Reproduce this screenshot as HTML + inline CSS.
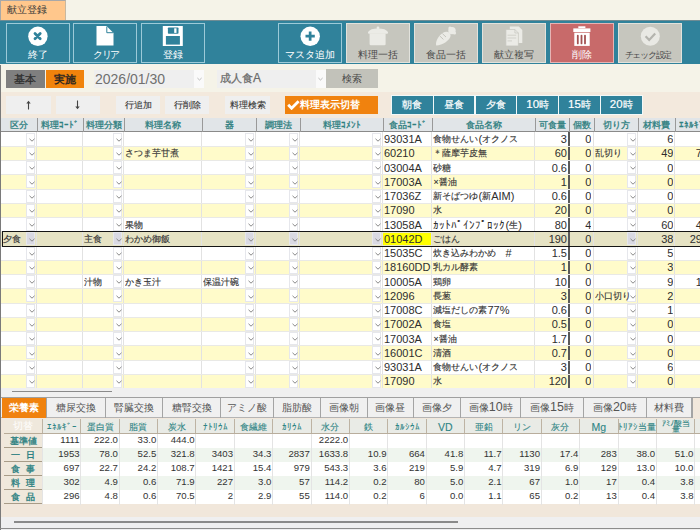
<!DOCTYPE html><html><head><meta charset="utf-8"><style>
*{box-sizing:border-box;margin:0;padding:0}
html,body{width:700px;height:530px;overflow:hidden;background:#F5F3E8;font-family:"Liberation Sans",sans-serif;color:#333}
.ab{position:absolute}
.tb{position:absolute;top:23px;width:64px;height:40px;border:1px solid #9ccad8;background:#30829B;color:#fff;font-size:10px;text-align:center}
.tb .lbl{position:absolute;left:0;right:0;top:25px;line-height:11px;white-space:nowrap}
.tb svg{position:absolute;left:-1px;top:-1px}
.gb{background:#c6c6be;border-color:#e2e2dc;color:#4a4a4a}
.rb{background:#c86a6a;border-color:#e6b4b4;color:#fff}
.cell{position:absolute;white-space:nowrap;overflow:hidden;font-size:11px;line-height:14px}

.sb{position:absolute;background:#efefef;color:#333;font-size:9.4px;text-align:center;line-height:18.5px;-webkit-text-stroke:0.1px #333}
.mb{position:absolute;top:95.2px;height:19.5px;width:42.5px;background:#30829B;border:1px solid #f2f8f8;color:#fff;font-size:9.8px;text-align:center;line-height:17px;-webkit-text-stroke:0.2px #fff}
.hd{position:absolute;top:118px;height:14px;font-size:9.2px;line-height:15.5px;color:#2e7f80;-webkit-text-stroke:0.3px #2e7f80;text-align:center;white-space:nowrap;overflow:hidden}
.bt{position:absolute;top:398.3px;height:19.7px;background:#f0f0f0;border:1px solid #c4c4c4;color:#555;font-size:10.2px;text-align:center;line-height:18px;white-space:nowrap}
.nh{position:absolute;top:419.5px;height:13.5px;font-size:9px;line-height:15px;color:#2f8585;-webkit-text-stroke:0.1px #2f8585;text-align:center;white-space:nowrap;overflow:hidden}
.nc{position:absolute;font-size:9.6px;line-height:12.6px;text-align:right;white-space:nowrap;color:#333}
</style></head><body>
<div class="ab" style="left:0;top:0;width:66px;height:20.5px;background:#ffc78c;border-top:1px solid #a8a8a8;border-left:1px solid #a8a8a8;border-right:1px solid #c8b8a0;font-size:10.3px;line-height:17.5px;padding-left:6px;color:#3a3a3a">献立登録</div><div class="ab" style="left:0;top:20px;width:700px;height:44.2px;background:#30829B;border-top:1px solid #6f8c94"></div><div class="tb " style="left:5.5px"><svg width="64" height="40" viewBox="0 0 64 40"><circle cx="31.9" cy="13.3" r="9.7" fill="#fff"/><path d="M29 10.6L34.2 15.8M34.2 10.6L29 15.8" stroke="#30829B" stroke-width="2.8" stroke-linecap="round"/></svg><div class="lbl">終了</div></div><div class="tb " style="left:73.2px"><svg width="64" height="40" viewBox="0 0 64 40"><path d="M23.5 3H33.5L40.5 10V22.5H23.5Z" fill="#fff"/><path d="M33.8 3.5V9.7H40" fill="none" stroke="#30829B" stroke-width="1"/></svg><div class="lbl"><span style="letter-spacing:-1.6px;margin-left:1.6px">クリア</span></div></div><div class="tb " style="left:141.2px"><svg width="64" height="40" viewBox="0 0 64 40"><rect x="21.8" y="3" width="20" height="20" fill="#fff"/><rect x="26.9" y="4.4" width="10.6" height="6.3" rx="0.8" fill="#30829B"/><rect x="33.2" y="5.3" width="2.3" height="4.6" fill="#fff"/><rect x="24.9" y="13" width="14" height="8.6" fill="#30829B"/></svg><div class="lbl">登録</div></div><div class="tb " style="left:277.5px"><svg width="64" height="40" viewBox="0 0 64 40"><circle cx="32.2" cy="13.3" r="9.7" fill="#fff"/><path d="M32.15 8.5V17.8M27.5 13.15H36.8" stroke="#30829B" stroke-width="2.7"/></svg><div class="lbl">マスタ追加</div></div><div class="tb gb" style="left:345.6px"><svg width="64" height="40" viewBox="0 0 64 40"><rect x="30.7" y="3.6" width="2.6" height="2.8" rx="1" fill="#ebebe6"/><path d="M22.3 9Q24 5.6 32 5.6Q40 5.6 41.7 9Z" fill="#ebebe6"/><rect x="22" y="8.6" width="20" height="2.2" rx="1" fill="#ebebe6"/><path d="M23.6 10.6H39.6V21Q39.6 22.2 38.4 22.2H24.8Q23.6 22.2 23.6 21Z" fill="#ebebe6"/></svg><div class="lbl">料理一括</div></div><div class="tb gb" style="left:413.7px"><svg width="64" height="40" viewBox="0 0 64 40"><path d="M22.2 22.6C21.2 18.5 24.5 12.5 29 9.8C32.5 7.6 36.8 9.2 36.6 12.8C36.4 16.8 28.5 22.6 22.2 22.6Z" fill="#ebebe6"/><circle cx="38" cy="7.6" r="3.7" fill="#ebebe6"/><circle cx="36" cy="5" r="1.6" fill="#ebebe6"/><circle cx="40.5" cy="10" r="1.6" fill="#ebebe6"/><path d="M25.6 12.8L29.4 16.4M28.4 10.6L32 14" stroke="#c6c6be" stroke-width="1"/></svg><div class="lbl">食品一括</div></div><div class="tb gb" style="left:481.5px"><svg width="64" height="40" viewBox="0 0 64 40"><path d="M27.8 3.6H36.8L40.3 7.1V20H27.8Z" fill="#ebebe6"/><path d="M23.9 6.5H32.9L36.4 10V22.9H23.9Z" fill="#ebebe6" stroke="#c6c6be" stroke-width="0.7"/><path d="M32.9 6.5V10H36.4" fill="none" stroke="#c6c6be" stroke-width="0.7"/><path d="M25.5 12.2H34.2M25.5 15H34.2M25.5 17.9H30" stroke="#c6c6be" stroke-width="0.7"/></svg><div class="lbl">献立複写</div></div><div class="tb rb" style="left:549.6px"><svg width="64" height="40" viewBox="0 0 64 40"><rect x="28.3" y="3.3" width="7.1" height="1.9" fill="#fff"/><rect x="23.3" y="5.4" width="17.1" height="3.6" fill="#fff"/><path d="M24.3 9.7H39.7V22.9H24.3Z" fill="#fff"/><path d="M27.8 12.6V20.4M31.5 12.6V20.4M35 12.6V20.4" stroke="#a45252" stroke-width="1.8" stroke-linecap="round"/></svg><div class="lbl">削除</div></div><div class="tb gb" style="left:617.6px"><svg width="64" height="40" viewBox="0 0 64 40"><circle cx="32.3" cy="13.2" r="9.5" fill="#e9e9e4"/><path d="M27.6 13.2L31.2 17L37.2 10.4" fill="none" stroke="#b4b4ae" stroke-width="2.2"/></svg><div class="lbl" style="letter-spacing:-1.3px;font-size:9.4px;padding-right:3.5px">チェック設定</div></div><div class="ab" style="left:6px;top:69.5px;width:38.5px;height:18.5px;background:#7f7f7f;color:#2e2e2e;font-size:11px;line-height:18px;text-align:center;-webkit-text-stroke:0.3px #2e2e2e">基本</div><div class="ab" style="left:46px;top:69.5px;width:38px;height:18.5px;background:#f0830c;color:#222;font-size:11px;line-height:18px;text-align:center;-webkit-text-stroke:0.35px #222">実施</div><div class="ab" style="left:93.5px;top:70px;width:101px;height:17.7px;background:#efefef;color:#707070;font-size:14px;line-height:18px;padding-left:1.5px">2026/01/30</div><div class="ab" style="left:194.3px;top:70px;width:10px;height:17.7px;background:#fafafa"><svg class="ab" style="left:2.5px;top:7px" width="5" height="4" viewBox="0 0 5 4"><path d="M0.4 1L2.5 3L4.6 1" fill="none" stroke="#b4b4b4" stroke-width="0.9"/></svg></div><div class="ab" style="left:217px;top:70px;width:98.6px;height:17.7px;background:#efefef;color:#6a6a6a;font-size:10.5px;line-height:17px;padding-left:3px;-webkit-text-stroke:0.25px #6a6a6a">成人食<span style="font-size:12px">A</span></div><div class="ab" style="left:315.6px;top:70px;width:10px;height:17.7px;background:#fafafa"><svg class="ab" style="left:2.5px;top:7px" width="5" height="4" viewBox="0 0 5 4"><path d="M0.4 1L2.5 3L4.6 1" fill="none" stroke="#b4b4b4" stroke-width="0.9"/></svg></div><div class="ab" style="left:326px;top:69.3px;width:52.3px;height:19px;background:#c2c2ba;color:#454545;font-size:9.6px;line-height:19px;text-align:center">検索</div><div class="ab" style="left:0;top:92.3px;width:700px;height:25.5px;background:#f3e9dd"></div><div class="sb" style="left:6.0px;top:95.7px;width:45.0px;height:18.5px"><svg class="ab" style="left:19px;top:4px" width="7" height="10" viewBox="0 0 7 10"><path d="M3.5 2.5V9.5" stroke="#444" stroke-width="1.1"/><path d="M1.3 3.6L3.5 0.8L5.7 3.6Z" fill="#444"/></svg></div><div class="sb" style="left:56.0px;top:95.7px;width:44.0px;height:18.5px"><svg class="ab" style="left:18px;top:4.5px" width="7" height="10" viewBox="0 0 7 10"><path d="M3.5 0.5V7.5" stroke="#444" stroke-width="1.1"/><path d="M1.3 6.4L3.5 9.2L5.7 6.4Z" fill="#444"/></svg></div><div class="sb" style="left:116.4px;top:95.7px;width:43.6px;height:18.5px">行追加</div><div class="sb" style="left:165.0px;top:95.7px;width:44.0px;height:18.5px">行削除</div><div class="sb" style="left:225.4px;top:95.7px;width:44.6px;height:18.5px">料理検索</div><div class="ab" style="left:285px;top:95.7px;width:93px;height:18.5px;background:#f0820e;color:#fff;font-size:10.3px;font-weight:bold;line-height:18.5px;padding-left:15px;white-space:nowrap"><svg class="ab" style="left:1.5px;top:4.5px" width="13" height="10" viewBox="0 0 13 10"><path d="M1.2 4.8L4.6 8.3L11.6 1.2" fill="none" stroke="#fff" stroke-width="2.8"/></svg>料理表示切替</div><div class="mb" style="left:391.0px">朝食</div><div class="mb" style="left:432.8px">昼食</div><div class="mb" style="left:474.6px">夕食</div><div class="mb" style="left:516.4px"><span style="font-size:11.5px">10</span>時</div><div class="mb" style="left:558.2px"><span style="font-size:11.5px">15</span>時</div><div class="mb" style="left:600.0px"><span style="font-size:11.5px">20</span>時</div><div class="ab" style="left:0;top:64.5px;width:1.3px;height:466px;background:#7a7a7a"></div><div class="ab" style="left:1.3px;top:117.8px;width:700px;height:14.6px;background:#e1e5e8;border-bottom:1px solid #8a8a8a"></div><div class="hd" style="left:1.3px;width:35.7px">区分</div><div class="hd" style="left:37.0px;width:46.0px">料理ｺｰﾄﾞ</div><div class="ab" style="left:36.5px;top:118px;width:1px;height:14.5px;background:#999"></div><div class="hd" style="left:83.0px;width:41.0px">料理分類</div><div class="ab" style="left:82.5px;top:118px;width:1px;height:14.5px;background:#999"></div><div class="hd" style="left:124.0px;width:78.0px">料理名称</div><div class="ab" style="left:123.5px;top:118px;width:1px;height:14.5px;background:#999"></div><div class="hd" style="left:202.0px;width:54.0px">器</div><div class="ab" style="left:201.5px;top:118px;width:1px;height:14.5px;background:#999"></div><div class="hd" style="left:256.0px;width:44.0px">調理法</div><div class="ab" style="left:255.5px;top:118px;width:1px;height:14.5px;background:#999"></div><div class="hd" style="left:300.0px;width:83.0px">料理ｺﾒﾝﾄ</div><div class="ab" style="left:299.5px;top:118px;width:1px;height:14.5px;background:#999"></div><div class="hd" style="left:383.0px;width:49.0px">食品ｺｰﾄﾞ</div><div class="ab" style="left:382.5px;top:118px;width:1px;height:14.5px;background:#999"></div><div class="hd" style="left:432.0px;width:103.0px">食品名称</div><div class="ab" style="left:431.5px;top:118px;width:1px;height:14.5px;background:#999"></div><div class="hd" style="left:535.0px;width:34.0px">可食量</div><div class="ab" style="left:534.5px;top:118px;width:1px;height:14.5px;background:#999"></div><div class="hd" style="left:569.0px;width:25.0px">個数</div><div class="ab" style="left:568.5px;top:118px;width:1px;height:14.5px;background:#999"></div><div class="hd" style="left:594.0px;width:44.0px">切り方</div><div class="ab" style="left:593.5px;top:118px;width:1px;height:14.5px;background:#999"></div><div class="hd" style="left:638.0px;width:37.0px">材料費</div><div class="ab" style="left:637.5px;top:118px;width:1px;height:14.5px;background:#999"></div><div class="hd" style="left:679px;width:30px;text-align:left">ｴﾈﾙｷﾞｰ</div><div class="ab" style="left:674.5px;top:118px;width:1px;height:14.5px;background:#999"></div><div class="ab" style="left:1.3px;top:132.00px;width:700px;height:255.60px;overflow:hidden"><div class="ab" style="left:0;top:0.00px;width:700px;height:14.25px;background:#ffffff"></div><div class="ab" style="left:0;top:14.25px;width:700px;height:14.25px;background:#fffbca"></div><div class="ab" style="left:0;top:28.50px;width:700px;height:14.25px;background:#ffffff"></div><div class="ab" style="left:0;top:42.75px;width:700px;height:14.25px;background:#fffbca"></div><div class="ab" style="left:0;top:57.00px;width:700px;height:14.25px;background:#ffffff"></div><div class="ab" style="left:0;top:71.25px;width:700px;height:14.25px;background:#fffbca"></div><div class="ab" style="left:0;top:85.50px;width:700px;height:14.25px;background:#ffffff"></div><div class="ab" style="left:0;top:99.75px;width:700px;height:14.25px;background:#e6e3c4"></div><div class="ab" style="left:381.2px;top:101.05px;width:49.4px;height:11.5px;background:#ffff00"></div><div class="ab" style="left:0;top:114.00px;width:700px;height:14.25px;background:#ffffff"></div><div class="ab" style="left:0;top:128.25px;width:700px;height:14.25px;background:#fffbca"></div><div class="ab" style="left:0;top:142.50px;width:700px;height:14.25px;background:#ffffff"></div><div class="ab" style="left:0;top:156.75px;width:700px;height:14.25px;background:#fffbca"></div><div class="ab" style="left:0;top:171.00px;width:700px;height:14.25px;background:#ffffff"></div><div class="ab" style="left:0;top:185.25px;width:700px;height:14.25px;background:#fffbca"></div><div class="ab" style="left:0;top:199.50px;width:700px;height:14.25px;background:#ffffff"></div><div class="ab" style="left:0;top:213.75px;width:700px;height:14.25px;background:#fffbca"></div><div class="ab" style="left:0;top:228.00px;width:700px;height:14.25px;background:#ffffff"></div><div class="ab" style="left:0;top:242.25px;width:700px;height:14.25px;background:#fffbca"></div><div class="ab" style="left:35.2px;top:0;width:1.0px;height:256.50px;background:#e2e2e2"></div><div class="ab" style="left:81.2px;top:0;width:1.0px;height:256.50px;background:#e2e2e2"></div><div class="ab" style="left:122.2px;top:0;width:1.0px;height:256.50px;background:#e2e2e2"></div><div class="ab" style="left:200.2px;top:0;width:1.0px;height:256.50px;background:#e2e2e2"></div><div class="ab" style="left:254.2px;top:0;width:1.0px;height:256.50px;background:#e2e2e2"></div><div class="ab" style="left:298.2px;top:0;width:1.0px;height:256.50px;background:#e2e2e2"></div><div class="ab" style="left:381.2px;top:0;width:1.0px;height:256.50px;background:#e2e2e2"></div><div class="ab" style="left:430.2px;top:0;width:1.0px;height:256.50px;background:#e2e2e2"></div><div class="ab" style="left:533.2px;top:0;width:1.0px;height:256.50px;background:#e2e2e2"></div><div class="ab" style="left:567.2px;top:0;width:1.2px;height:256.50px;background:#5a5a5a"></div><div class="ab" style="left:592.2px;top:0;width:1.0px;height:256.50px;background:#e2e2e2"></div><div class="ab" style="left:636.2px;top:0;width:1.0px;height:256.50px;background:#e2e2e2"></div><div class="ab" style="left:673.2px;top:0;width:1.0px;height:256.50px;background:#e2e2e2"></div><div class="ab" style="left:0;top:13.75px;width:700px;height:1px;background:#e9e9e6"></div><div class="ab" style="left:0;top:28.00px;width:700px;height:1px;background:#e9e9e6"></div><div class="ab" style="left:0;top:42.25px;width:700px;height:1px;background:#e9e9e6"></div><div class="ab" style="left:0;top:56.50px;width:700px;height:1px;background:#e9e9e6"></div><div class="ab" style="left:0;top:70.75px;width:700px;height:1px;background:#e9e9e6"></div><div class="ab" style="left:0;top:85.00px;width:700px;height:1px;background:#e9e9e6"></div><div class="ab" style="left:0;top:99.25px;width:700px;height:1px;background:#e9e9e6"></div><div class="ab" style="left:0;top:113.50px;width:700px;height:1px;background:#e9e9e6"></div><div class="ab" style="left:0;top:127.75px;width:700px;height:1px;background:#e9e9e6"></div><div class="ab" style="left:0;top:142.00px;width:700px;height:1px;background:#e9e9e6"></div><div class="ab" style="left:0;top:156.25px;width:700px;height:1px;background:#e9e9e6"></div><div class="ab" style="left:0;top:170.50px;width:700px;height:1px;background:#e9e9e6"></div><div class="ab" style="left:0;top:184.75px;width:700px;height:1px;background:#e9e9e6"></div><div class="ab" style="left:0;top:199.00px;width:700px;height:1px;background:#e9e9e6"></div><div class="ab" style="left:0;top:213.25px;width:700px;height:1px;background:#e9e9e6"></div><div class="ab" style="left:0;top:227.50px;width:700px;height:1px;background:#e9e9e6"></div><div class="ab" style="left:0;top:241.75px;width:700px;height:1px;background:#e9e9e6"></div><div class="ab" style="left:25.2px;top:0.60px;width:9px;height:13.05px;background:#fff;border:1px solid #e6e7ec"><svg class="ab" style="left:1.2px;top:4.2px" width="6" height="4" viewBox="0 0 6 4"><path d="M0.5 0.8L3 3.2L5.5 0.8" fill="none" stroke="#7a7a7a" stroke-width="0.9"/></svg></div><div class="ab" style="left:112.2px;top:0.60px;width:9px;height:13.05px;background:#fff;border:1px solid #e6e7ec"><svg class="ab" style="left:1.2px;top:4.2px" width="6" height="4" viewBox="0 0 6 4"><path d="M0.5 0.8L3 3.2L5.5 0.8" fill="none" stroke="#7a7a7a" stroke-width="0.9"/></svg></div><div class="ab" style="left:244.2px;top:0.60px;width:9px;height:13.05px;background:#fff;border:1px solid #e6e7ec"><svg class="ab" style="left:1.2px;top:4.2px" width="6" height="4" viewBox="0 0 6 4"><path d="M0.5 0.8L3 3.2L5.5 0.8" fill="none" stroke="#7a7a7a" stroke-width="0.9"/></svg></div><div class="ab" style="left:288.2px;top:0.60px;width:9px;height:13.05px;background:#fff;border:1px solid #e6e7ec"><svg class="ab" style="left:1.2px;top:4.2px" width="6" height="4" viewBox="0 0 6 4"><path d="M0.5 0.8L3 3.2L5.5 0.8" fill="none" stroke="#7a7a7a" stroke-width="0.9"/></svg></div><div class="ab" style="left:371.2px;top:0.60px;width:9px;height:13.05px;background:#fff;border:1px solid #e6e7ec"><svg class="ab" style="left:1.2px;top:4.2px" width="6" height="4" viewBox="0 0 6 4"><path d="M0.5 0.8L3 3.2L5.5 0.8" fill="none" stroke="#7a7a7a" stroke-width="0.9"/></svg></div><div class="ab" style="left:626.2px;top:0.60px;width:9px;height:13.05px;background:#fff;border:1px solid #e6e7ec"><svg class="ab" style="left:1.2px;top:4.2px" width="6" height="4" viewBox="0 0 6 4"><path d="M0.5 0.8L3 3.2L5.5 0.8" fill="none" stroke="#7a7a7a" stroke-width="0.9"/></svg></div><div class="cell" style="left:382.7px;top:0.00px;width:48.0px;color:#2e2e2e">93031A</div><div class="cell" style="left:432.2px;top:0.00px;width:101.5px;color:#2e2e2e"><span style="font-size:8.8px;vertical-align:1px;-webkit-text-stroke:0.15px #444">食物せんい</span>(<span style="font-size:8.8px;vertical-align:1px;-webkit-text-stroke:0.15px #444">オクノス</span></div><div class="cell" style="left:533.7px;top:0.00px;width:32.0px;text-align:right;color:#2e2e2e">3</div><div class="cell" style="left:567.7px;top:0.00px;width:22.5px;text-align:right;color:#2e2e2e">0</div><div class="cell" style="left:636.7px;top:0.00px;width:35.5px;text-align:right;color:#2e2e2e">6</div><div class="ab" style="left:25.2px;top:14.85px;width:9px;height:13.05px;background:#fff;border:1px solid #e6e7ec"><svg class="ab" style="left:1.2px;top:4.2px" width="6" height="4" viewBox="0 0 6 4"><path d="M0.5 0.8L3 3.2L5.5 0.8" fill="none" stroke="#7a7a7a" stroke-width="0.9"/></svg></div><div class="ab" style="left:112.2px;top:14.85px;width:9px;height:13.05px;background:#fff;border:1px solid #e6e7ec"><svg class="ab" style="left:1.2px;top:4.2px" width="6" height="4" viewBox="0 0 6 4"><path d="M0.5 0.8L3 3.2L5.5 0.8" fill="none" stroke="#7a7a7a" stroke-width="0.9"/></svg></div><div class="ab" style="left:244.2px;top:14.85px;width:9px;height:13.05px;background:#fff;border:1px solid #e6e7ec"><svg class="ab" style="left:1.2px;top:4.2px" width="6" height="4" viewBox="0 0 6 4"><path d="M0.5 0.8L3 3.2L5.5 0.8" fill="none" stroke="#7a7a7a" stroke-width="0.9"/></svg></div><div class="ab" style="left:288.2px;top:14.85px;width:9px;height:13.05px;background:#fff;border:1px solid #e6e7ec"><svg class="ab" style="left:1.2px;top:4.2px" width="6" height="4" viewBox="0 0 6 4"><path d="M0.5 0.8L3 3.2L5.5 0.8" fill="none" stroke="#7a7a7a" stroke-width="0.9"/></svg></div><div class="ab" style="left:371.2px;top:14.85px;width:9px;height:13.05px;background:#fff;border:1px solid #e6e7ec"><svg class="ab" style="left:1.2px;top:4.2px" width="6" height="4" viewBox="0 0 6 4"><path d="M0.5 0.8L3 3.2L5.5 0.8" fill="none" stroke="#7a7a7a" stroke-width="0.9"/></svg></div><div class="ab" style="left:626.2px;top:14.85px;width:9px;height:13.05px;background:#fff;border:1px solid #e6e7ec"><svg class="ab" style="left:1.2px;top:4.2px" width="6" height="4" viewBox="0 0 6 4"><path d="M0.5 0.8L3 3.2L5.5 0.8" fill="none" stroke="#7a7a7a" stroke-width="0.9"/></svg></div><div class="cell" style="left:124.2px;top:14.25px;width:76.5px;color:#2e2e2e"><span style="font-size:8.8px;vertical-align:1px;-webkit-text-stroke:0.15px #444">さつま芋甘煮</span></div><div class="cell" style="left:382.7px;top:14.25px;width:48.0px;color:#2e2e2e">60210</div><div class="cell" style="left:432.2px;top:14.25px;width:101.5px;color:#2e2e2e"><span style="font-size:8.8px;vertical-align:1px;-webkit-text-stroke:0.15px #444">＊薩摩芋皮無</span></div><div class="cell" style="left:533.7px;top:14.25px;width:32.0px;text-align:right;color:#2e2e2e">60</div><div class="cell" style="left:567.7px;top:14.25px;width:22.5px;text-align:right;color:#2e2e2e">0</div><div class="cell" style="left:593.7px;top:14.25px;width:43.0px;color:#2e2e2e"><span style="font-size:8.8px;vertical-align:1px;-webkit-text-stroke:0.15px #444">乱切り</span></div><div class="cell" style="left:636.7px;top:14.25px;width:35.5px;text-align:right;color:#2e2e2e">49</div><div class="cell" style="left:673.7px;top:14.25px;width:33px;text-align:right;color:#2e2e2e;overflow:visible">72</div><div class="ab" style="left:25.2px;top:29.10px;width:9px;height:13.05px;background:#fff;border:1px solid #e6e7ec"><svg class="ab" style="left:1.2px;top:4.2px" width="6" height="4" viewBox="0 0 6 4"><path d="M0.5 0.8L3 3.2L5.5 0.8" fill="none" stroke="#7a7a7a" stroke-width="0.9"/></svg></div><div class="ab" style="left:112.2px;top:29.10px;width:9px;height:13.05px;background:#fff;border:1px solid #e6e7ec"><svg class="ab" style="left:1.2px;top:4.2px" width="6" height="4" viewBox="0 0 6 4"><path d="M0.5 0.8L3 3.2L5.5 0.8" fill="none" stroke="#7a7a7a" stroke-width="0.9"/></svg></div><div class="ab" style="left:244.2px;top:29.10px;width:9px;height:13.05px;background:#fff;border:1px solid #e6e7ec"><svg class="ab" style="left:1.2px;top:4.2px" width="6" height="4" viewBox="0 0 6 4"><path d="M0.5 0.8L3 3.2L5.5 0.8" fill="none" stroke="#7a7a7a" stroke-width="0.9"/></svg></div><div class="ab" style="left:288.2px;top:29.10px;width:9px;height:13.05px;background:#fff;border:1px solid #e6e7ec"><svg class="ab" style="left:1.2px;top:4.2px" width="6" height="4" viewBox="0 0 6 4"><path d="M0.5 0.8L3 3.2L5.5 0.8" fill="none" stroke="#7a7a7a" stroke-width="0.9"/></svg></div><div class="ab" style="left:371.2px;top:29.10px;width:9px;height:13.05px;background:#fff;border:1px solid #e6e7ec"><svg class="ab" style="left:1.2px;top:4.2px" width="6" height="4" viewBox="0 0 6 4"><path d="M0.5 0.8L3 3.2L5.5 0.8" fill="none" stroke="#7a7a7a" stroke-width="0.9"/></svg></div><div class="ab" style="left:626.2px;top:29.10px;width:9px;height:13.05px;background:#fff;border:1px solid #e6e7ec"><svg class="ab" style="left:1.2px;top:4.2px" width="6" height="4" viewBox="0 0 6 4"><path d="M0.5 0.8L3 3.2L5.5 0.8" fill="none" stroke="#7a7a7a" stroke-width="0.9"/></svg></div><div class="cell" style="left:382.7px;top:28.50px;width:48.0px;color:#2e2e2e">03004A</div><div class="cell" style="left:432.2px;top:28.50px;width:101.5px;color:#2e2e2e"><span style="font-size:8.8px;vertical-align:1px;-webkit-text-stroke:0.15px #444">砂糖</span></div><div class="cell" style="left:533.7px;top:28.50px;width:32.0px;text-align:right;color:#2e2e2e">0.6</div><div class="cell" style="left:567.7px;top:28.50px;width:22.5px;text-align:right;color:#2e2e2e">0</div><div class="cell" style="left:636.7px;top:28.50px;width:35.5px;text-align:right;color:#2e2e2e">0</div><div class="ab" style="left:25.2px;top:43.35px;width:9px;height:13.05px;background:#fff;border:1px solid #e6e7ec"><svg class="ab" style="left:1.2px;top:4.2px" width="6" height="4" viewBox="0 0 6 4"><path d="M0.5 0.8L3 3.2L5.5 0.8" fill="none" stroke="#7a7a7a" stroke-width="0.9"/></svg></div><div class="ab" style="left:112.2px;top:43.35px;width:9px;height:13.05px;background:#fff;border:1px solid #e6e7ec"><svg class="ab" style="left:1.2px;top:4.2px" width="6" height="4" viewBox="0 0 6 4"><path d="M0.5 0.8L3 3.2L5.5 0.8" fill="none" stroke="#7a7a7a" stroke-width="0.9"/></svg></div><div class="ab" style="left:244.2px;top:43.35px;width:9px;height:13.05px;background:#fff;border:1px solid #e6e7ec"><svg class="ab" style="left:1.2px;top:4.2px" width="6" height="4" viewBox="0 0 6 4"><path d="M0.5 0.8L3 3.2L5.5 0.8" fill="none" stroke="#7a7a7a" stroke-width="0.9"/></svg></div><div class="ab" style="left:288.2px;top:43.35px;width:9px;height:13.05px;background:#fff;border:1px solid #e6e7ec"><svg class="ab" style="left:1.2px;top:4.2px" width="6" height="4" viewBox="0 0 6 4"><path d="M0.5 0.8L3 3.2L5.5 0.8" fill="none" stroke="#7a7a7a" stroke-width="0.9"/></svg></div><div class="ab" style="left:371.2px;top:43.35px;width:9px;height:13.05px;background:#fff;border:1px solid #e6e7ec"><svg class="ab" style="left:1.2px;top:4.2px" width="6" height="4" viewBox="0 0 6 4"><path d="M0.5 0.8L3 3.2L5.5 0.8" fill="none" stroke="#7a7a7a" stroke-width="0.9"/></svg></div><div class="ab" style="left:626.2px;top:43.35px;width:9px;height:13.05px;background:#fff;border:1px solid #e6e7ec"><svg class="ab" style="left:1.2px;top:4.2px" width="6" height="4" viewBox="0 0 6 4"><path d="M0.5 0.8L3 3.2L5.5 0.8" fill="none" stroke="#7a7a7a" stroke-width="0.9"/></svg></div><div class="cell" style="left:382.7px;top:42.75px;width:48.0px;color:#2e2e2e">17003A</div><div class="cell" style="left:432.2px;top:42.75px;width:101.5px;color:#2e2e2e"><span style="font-size:8.8px;vertical-align:1px;-webkit-text-stroke:0.15px #444">×醤油</span></div><div class="cell" style="left:533.7px;top:42.75px;width:32.0px;text-align:right;color:#2e2e2e">1</div><div class="cell" style="left:567.7px;top:42.75px;width:22.5px;text-align:right;color:#2e2e2e">0</div><div class="cell" style="left:636.7px;top:42.75px;width:35.5px;text-align:right;color:#2e2e2e">0</div><div class="ab" style="left:25.2px;top:57.60px;width:9px;height:13.05px;background:#fff;border:1px solid #e6e7ec"><svg class="ab" style="left:1.2px;top:4.2px" width="6" height="4" viewBox="0 0 6 4"><path d="M0.5 0.8L3 3.2L5.5 0.8" fill="none" stroke="#7a7a7a" stroke-width="0.9"/></svg></div><div class="ab" style="left:112.2px;top:57.60px;width:9px;height:13.05px;background:#fff;border:1px solid #e6e7ec"><svg class="ab" style="left:1.2px;top:4.2px" width="6" height="4" viewBox="0 0 6 4"><path d="M0.5 0.8L3 3.2L5.5 0.8" fill="none" stroke="#7a7a7a" stroke-width="0.9"/></svg></div><div class="ab" style="left:244.2px;top:57.60px;width:9px;height:13.05px;background:#fff;border:1px solid #e6e7ec"><svg class="ab" style="left:1.2px;top:4.2px" width="6" height="4" viewBox="0 0 6 4"><path d="M0.5 0.8L3 3.2L5.5 0.8" fill="none" stroke="#7a7a7a" stroke-width="0.9"/></svg></div><div class="ab" style="left:288.2px;top:57.60px;width:9px;height:13.05px;background:#fff;border:1px solid #e6e7ec"><svg class="ab" style="left:1.2px;top:4.2px" width="6" height="4" viewBox="0 0 6 4"><path d="M0.5 0.8L3 3.2L5.5 0.8" fill="none" stroke="#7a7a7a" stroke-width="0.9"/></svg></div><div class="ab" style="left:371.2px;top:57.60px;width:9px;height:13.05px;background:#fff;border:1px solid #e6e7ec"><svg class="ab" style="left:1.2px;top:4.2px" width="6" height="4" viewBox="0 0 6 4"><path d="M0.5 0.8L3 3.2L5.5 0.8" fill="none" stroke="#7a7a7a" stroke-width="0.9"/></svg></div><div class="ab" style="left:626.2px;top:57.60px;width:9px;height:13.05px;background:#fff;border:1px solid #e6e7ec"><svg class="ab" style="left:1.2px;top:4.2px" width="6" height="4" viewBox="0 0 6 4"><path d="M0.5 0.8L3 3.2L5.5 0.8" fill="none" stroke="#7a7a7a" stroke-width="0.9"/></svg></div><div class="cell" style="left:382.7px;top:57.00px;width:48.0px;color:#2e2e2e">17036Z</div><div class="cell" style="left:432.2px;top:57.00px;width:101.5px;color:#2e2e2e"><span style="font-size:8.8px;vertical-align:1px;-webkit-text-stroke:0.15px #444">新そばつゆ</span>(<span style="font-size:8.8px;vertical-align:1px;-webkit-text-stroke:0.15px #444">新</span>AIM)</div><div class="cell" style="left:533.7px;top:57.00px;width:32.0px;text-align:right;color:#2e2e2e">0.6</div><div class="cell" style="left:567.7px;top:57.00px;width:22.5px;text-align:right;color:#2e2e2e">0</div><div class="cell" style="left:636.7px;top:57.00px;width:35.5px;text-align:right;color:#2e2e2e">0</div><div class="ab" style="left:25.2px;top:71.85px;width:9px;height:13.05px;background:#fff;border:1px solid #e6e7ec"><svg class="ab" style="left:1.2px;top:4.2px" width="6" height="4" viewBox="0 0 6 4"><path d="M0.5 0.8L3 3.2L5.5 0.8" fill="none" stroke="#7a7a7a" stroke-width="0.9"/></svg></div><div class="ab" style="left:112.2px;top:71.85px;width:9px;height:13.05px;background:#fff;border:1px solid #e6e7ec"><svg class="ab" style="left:1.2px;top:4.2px" width="6" height="4" viewBox="0 0 6 4"><path d="M0.5 0.8L3 3.2L5.5 0.8" fill="none" stroke="#7a7a7a" stroke-width="0.9"/></svg></div><div class="ab" style="left:244.2px;top:71.85px;width:9px;height:13.05px;background:#fff;border:1px solid #e6e7ec"><svg class="ab" style="left:1.2px;top:4.2px" width="6" height="4" viewBox="0 0 6 4"><path d="M0.5 0.8L3 3.2L5.5 0.8" fill="none" stroke="#7a7a7a" stroke-width="0.9"/></svg></div><div class="ab" style="left:288.2px;top:71.85px;width:9px;height:13.05px;background:#fff;border:1px solid #e6e7ec"><svg class="ab" style="left:1.2px;top:4.2px" width="6" height="4" viewBox="0 0 6 4"><path d="M0.5 0.8L3 3.2L5.5 0.8" fill="none" stroke="#7a7a7a" stroke-width="0.9"/></svg></div><div class="ab" style="left:371.2px;top:71.85px;width:9px;height:13.05px;background:#fff;border:1px solid #e6e7ec"><svg class="ab" style="left:1.2px;top:4.2px" width="6" height="4" viewBox="0 0 6 4"><path d="M0.5 0.8L3 3.2L5.5 0.8" fill="none" stroke="#7a7a7a" stroke-width="0.9"/></svg></div><div class="ab" style="left:626.2px;top:71.85px;width:9px;height:13.05px;background:#fff;border:1px solid #e6e7ec"><svg class="ab" style="left:1.2px;top:4.2px" width="6" height="4" viewBox="0 0 6 4"><path d="M0.5 0.8L3 3.2L5.5 0.8" fill="none" stroke="#7a7a7a" stroke-width="0.9"/></svg></div><div class="cell" style="left:382.7px;top:71.25px;width:48.0px;color:#2e2e2e">17090</div><div class="cell" style="left:432.2px;top:71.25px;width:101.5px;color:#2e2e2e"><span style="font-size:8.8px;vertical-align:1px;-webkit-text-stroke:0.15px #444">水</span></div><div class="cell" style="left:533.7px;top:71.25px;width:32.0px;text-align:right;color:#2e2e2e">20</div><div class="cell" style="left:567.7px;top:71.25px;width:22.5px;text-align:right;color:#2e2e2e">0</div><div class="cell" style="left:636.7px;top:71.25px;width:35.5px;text-align:right;color:#2e2e2e">0</div><div class="ab" style="left:25.2px;top:86.10px;width:9px;height:13.05px;background:#fff;border:1px solid #e6e7ec"><svg class="ab" style="left:1.2px;top:4.2px" width="6" height="4" viewBox="0 0 6 4"><path d="M0.5 0.8L3 3.2L5.5 0.8" fill="none" stroke="#7a7a7a" stroke-width="0.9"/></svg></div><div class="ab" style="left:112.2px;top:86.10px;width:9px;height:13.05px;background:#fff;border:1px solid #e6e7ec"><svg class="ab" style="left:1.2px;top:4.2px" width="6" height="4" viewBox="0 0 6 4"><path d="M0.5 0.8L3 3.2L5.5 0.8" fill="none" stroke="#7a7a7a" stroke-width="0.9"/></svg></div><div class="ab" style="left:244.2px;top:86.10px;width:9px;height:13.05px;background:#fff;border:1px solid #e6e7ec"><svg class="ab" style="left:1.2px;top:4.2px" width="6" height="4" viewBox="0 0 6 4"><path d="M0.5 0.8L3 3.2L5.5 0.8" fill="none" stroke="#7a7a7a" stroke-width="0.9"/></svg></div><div class="ab" style="left:288.2px;top:86.10px;width:9px;height:13.05px;background:#fff;border:1px solid #e6e7ec"><svg class="ab" style="left:1.2px;top:4.2px" width="6" height="4" viewBox="0 0 6 4"><path d="M0.5 0.8L3 3.2L5.5 0.8" fill="none" stroke="#7a7a7a" stroke-width="0.9"/></svg></div><div class="ab" style="left:371.2px;top:86.10px;width:9px;height:13.05px;background:#fff;border:1px solid #e6e7ec"><svg class="ab" style="left:1.2px;top:4.2px" width="6" height="4" viewBox="0 0 6 4"><path d="M0.5 0.8L3 3.2L5.5 0.8" fill="none" stroke="#7a7a7a" stroke-width="0.9"/></svg></div><div class="ab" style="left:626.2px;top:86.10px;width:9px;height:13.05px;background:#fff;border:1px solid #e6e7ec"><svg class="ab" style="left:1.2px;top:4.2px" width="6" height="4" viewBox="0 0 6 4"><path d="M0.5 0.8L3 3.2L5.5 0.8" fill="none" stroke="#7a7a7a" stroke-width="0.9"/></svg></div><div class="cell" style="left:124.2px;top:85.50px;width:76.5px;color:#2e2e2e"><span style="font-size:8.8px;vertical-align:1px;-webkit-text-stroke:0.15px #444">果物</span></div><div class="cell" style="left:382.7px;top:85.50px;width:48.0px;color:#2e2e2e">13058A</div><div class="cell" style="left:432.2px;top:85.50px;width:101.5px;color:#2e2e2e">ｶｯﾄﾊﾟｲﾝﾌﾟﾛｯｸ(<span style="font-size:8.8px;vertical-align:1px;-webkit-text-stroke:0.15px #444">生</span>)</div><div class="cell" style="left:533.7px;top:85.50px;width:32.0px;text-align:right;color:#2e2e2e">80</div><div class="cell" style="left:567.7px;top:85.50px;width:22.5px;text-align:right;color:#2e2e2e">4</div><div class="cell" style="left:636.7px;top:85.50px;width:35.5px;text-align:right;color:#2e2e2e">60</div><div class="cell" style="left:673.7px;top:85.50px;width:33px;text-align:right;color:#2e2e2e;overflow:visible">43</div><div class="ab" style="left:25.2px;top:100.35px;width:9px;height:13.05px;background:#d9d9e3;border:1px solid #e6e7ec"><svg class="ab" style="left:1.2px;top:4.2px" width="6" height="4" viewBox="0 0 6 4"><path d="M0.5 0.8L3 3.2L5.5 0.8" fill="none" stroke="#7a7a7a" stroke-width="0.9"/></svg></div><div class="ab" style="left:112.2px;top:100.35px;width:9px;height:13.05px;background:#d9d9e3;border:1px solid #e6e7ec"><svg class="ab" style="left:1.2px;top:4.2px" width="6" height="4" viewBox="0 0 6 4"><path d="M0.5 0.8L3 3.2L5.5 0.8" fill="none" stroke="#7a7a7a" stroke-width="0.9"/></svg></div><div class="ab" style="left:244.2px;top:100.35px;width:9px;height:13.05px;background:#d9d9e3;border:1px solid #e6e7ec"><svg class="ab" style="left:1.2px;top:4.2px" width="6" height="4" viewBox="0 0 6 4"><path d="M0.5 0.8L3 3.2L5.5 0.8" fill="none" stroke="#7a7a7a" stroke-width="0.9"/></svg></div><div class="ab" style="left:288.2px;top:100.35px;width:9px;height:13.05px;background:#d9d9e3;border:1px solid #e6e7ec"><svg class="ab" style="left:1.2px;top:4.2px" width="6" height="4" viewBox="0 0 6 4"><path d="M0.5 0.8L3 3.2L5.5 0.8" fill="none" stroke="#7a7a7a" stroke-width="0.9"/></svg></div><div class="ab" style="left:371.2px;top:100.35px;width:9px;height:13.05px;background:#d9d9e3;border:1px solid #e6e7ec"><svg class="ab" style="left:1.2px;top:4.2px" width="6" height="4" viewBox="0 0 6 4"><path d="M0.5 0.8L3 3.2L5.5 0.8" fill="none" stroke="#7a7a7a" stroke-width="0.9"/></svg></div><div class="ab" style="left:626.2px;top:100.35px;width:9px;height:13.05px;background:#d9d9e3;border:1px solid #e6e7ec"><svg class="ab" style="left:1.2px;top:4.2px" width="6" height="4" viewBox="0 0 6 4"><path d="M0.5 0.8L3 3.2L5.5 0.8" fill="none" stroke="#7a7a7a" stroke-width="0.9"/></svg></div><div class="cell" style="left:2.0px;top:99.75px;width:33.7px;color:#2e2e2e"><span style="font-size:8.8px;vertical-align:1px;-webkit-text-stroke:0.15px #444">夕食</span></div><div class="cell" style="left:82.7px;top:99.75px;width:40.0px;color:#2e2e2e"><span style="font-size:8.8px;vertical-align:1px;-webkit-text-stroke:0.15px #444">主食</span></div><div class="cell" style="left:124.2px;top:99.75px;width:76.5px;color:#2e2e2e"><span style="font-size:8.8px;vertical-align:1px;-webkit-text-stroke:0.15px #444">わかめ御飯</span></div><div class="cell" style="left:382.7px;top:99.75px;width:48.0px;color:#2e2e2e">01042D</div><div class="cell" style="left:432.2px;top:99.75px;width:101.5px;color:#2e2e2e"><span style="font-size:8.8px;vertical-align:1px;-webkit-text-stroke:0.15px #444">ごはん</span></div><div class="cell" style="left:533.7px;top:99.75px;width:32.0px;text-align:right;color:#2e2e2e">190</div><div class="cell" style="left:567.7px;top:99.75px;width:22.5px;text-align:right;color:#2e2e2e">0</div><div class="cell" style="left:636.7px;top:99.75px;width:35.5px;text-align:right;color:#2e2e2e">38</div><div class="cell" style="left:673.7px;top:99.75px;width:33px;text-align:right;color:#2e2e2e;overflow:visible">298</div><div class="ab" style="left:25.2px;top:114.60px;width:9px;height:13.05px;background:#fff;border:1px solid #e6e7ec"><svg class="ab" style="left:1.2px;top:4.2px" width="6" height="4" viewBox="0 0 6 4"><path d="M0.5 0.8L3 3.2L5.5 0.8" fill="none" stroke="#7a7a7a" stroke-width="0.9"/></svg></div><div class="ab" style="left:112.2px;top:114.60px;width:9px;height:13.05px;background:#fff;border:1px solid #e6e7ec"><svg class="ab" style="left:1.2px;top:4.2px" width="6" height="4" viewBox="0 0 6 4"><path d="M0.5 0.8L3 3.2L5.5 0.8" fill="none" stroke="#7a7a7a" stroke-width="0.9"/></svg></div><div class="ab" style="left:244.2px;top:114.60px;width:9px;height:13.05px;background:#fff;border:1px solid #e6e7ec"><svg class="ab" style="left:1.2px;top:4.2px" width="6" height="4" viewBox="0 0 6 4"><path d="M0.5 0.8L3 3.2L5.5 0.8" fill="none" stroke="#7a7a7a" stroke-width="0.9"/></svg></div><div class="ab" style="left:288.2px;top:114.60px;width:9px;height:13.05px;background:#fff;border:1px solid #e6e7ec"><svg class="ab" style="left:1.2px;top:4.2px" width="6" height="4" viewBox="0 0 6 4"><path d="M0.5 0.8L3 3.2L5.5 0.8" fill="none" stroke="#7a7a7a" stroke-width="0.9"/></svg></div><div class="ab" style="left:371.2px;top:114.60px;width:9px;height:13.05px;background:#fff;border:1px solid #e6e7ec"><svg class="ab" style="left:1.2px;top:4.2px" width="6" height="4" viewBox="0 0 6 4"><path d="M0.5 0.8L3 3.2L5.5 0.8" fill="none" stroke="#7a7a7a" stroke-width="0.9"/></svg></div><div class="ab" style="left:626.2px;top:114.60px;width:9px;height:13.05px;background:#fff;border:1px solid #e6e7ec"><svg class="ab" style="left:1.2px;top:4.2px" width="6" height="4" viewBox="0 0 6 4"><path d="M0.5 0.8L3 3.2L5.5 0.8" fill="none" stroke="#7a7a7a" stroke-width="0.9"/></svg></div><div class="cell" style="left:382.7px;top:114.00px;width:48.0px;color:#2e2e2e">15035C</div><div class="cell" style="left:432.2px;top:114.00px;width:101.5px;color:#2e2e2e"><span style="font-size:8.8px;vertical-align:1px;-webkit-text-stroke:0.15px #444">炊き込みわかめ　</span>#</div><div class="cell" style="left:533.7px;top:114.00px;width:32.0px;text-align:right;color:#2e2e2e">1.5</div><div class="cell" style="left:567.7px;top:114.00px;width:22.5px;text-align:right;color:#2e2e2e">0</div><div class="cell" style="left:636.7px;top:114.00px;width:35.5px;text-align:right;color:#2e2e2e">5</div><div class="ab" style="left:25.2px;top:128.85px;width:9px;height:13.05px;background:#fff;border:1px solid #e6e7ec"><svg class="ab" style="left:1.2px;top:4.2px" width="6" height="4" viewBox="0 0 6 4"><path d="M0.5 0.8L3 3.2L5.5 0.8" fill="none" stroke="#7a7a7a" stroke-width="0.9"/></svg></div><div class="ab" style="left:112.2px;top:128.85px;width:9px;height:13.05px;background:#fff;border:1px solid #e6e7ec"><svg class="ab" style="left:1.2px;top:4.2px" width="6" height="4" viewBox="0 0 6 4"><path d="M0.5 0.8L3 3.2L5.5 0.8" fill="none" stroke="#7a7a7a" stroke-width="0.9"/></svg></div><div class="ab" style="left:244.2px;top:128.85px;width:9px;height:13.05px;background:#fff;border:1px solid #e6e7ec"><svg class="ab" style="left:1.2px;top:4.2px" width="6" height="4" viewBox="0 0 6 4"><path d="M0.5 0.8L3 3.2L5.5 0.8" fill="none" stroke="#7a7a7a" stroke-width="0.9"/></svg></div><div class="ab" style="left:288.2px;top:128.85px;width:9px;height:13.05px;background:#fff;border:1px solid #e6e7ec"><svg class="ab" style="left:1.2px;top:4.2px" width="6" height="4" viewBox="0 0 6 4"><path d="M0.5 0.8L3 3.2L5.5 0.8" fill="none" stroke="#7a7a7a" stroke-width="0.9"/></svg></div><div class="ab" style="left:371.2px;top:128.85px;width:9px;height:13.05px;background:#fff;border:1px solid #e6e7ec"><svg class="ab" style="left:1.2px;top:4.2px" width="6" height="4" viewBox="0 0 6 4"><path d="M0.5 0.8L3 3.2L5.5 0.8" fill="none" stroke="#7a7a7a" stroke-width="0.9"/></svg></div><div class="ab" style="left:626.2px;top:128.85px;width:9px;height:13.05px;background:#fff;border:1px solid #e6e7ec"><svg class="ab" style="left:1.2px;top:4.2px" width="6" height="4" viewBox="0 0 6 4"><path d="M0.5 0.8L3 3.2L5.5 0.8" fill="none" stroke="#7a7a7a" stroke-width="0.9"/></svg></div><div class="cell" style="left:382.7px;top:128.25px;width:48.0px;color:#2e2e2e">18160DD</div><div class="cell" style="left:432.2px;top:128.25px;width:101.5px;color:#2e2e2e"><span style="font-size:8.8px;vertical-align:1px;-webkit-text-stroke:0.15px #444">乳カル酵素</span></div><div class="cell" style="left:533.7px;top:128.25px;width:32.0px;text-align:right;color:#2e2e2e">1</div><div class="cell" style="left:567.7px;top:128.25px;width:22.5px;text-align:right;color:#2e2e2e">0</div><div class="cell" style="left:636.7px;top:128.25px;width:35.5px;text-align:right;color:#2e2e2e">3</div><div class="ab" style="left:25.2px;top:143.10px;width:9px;height:13.05px;background:#fff;border:1px solid #e6e7ec"><svg class="ab" style="left:1.2px;top:4.2px" width="6" height="4" viewBox="0 0 6 4"><path d="M0.5 0.8L3 3.2L5.5 0.8" fill="none" stroke="#7a7a7a" stroke-width="0.9"/></svg></div><div class="ab" style="left:112.2px;top:143.10px;width:9px;height:13.05px;background:#fff;border:1px solid #e6e7ec"><svg class="ab" style="left:1.2px;top:4.2px" width="6" height="4" viewBox="0 0 6 4"><path d="M0.5 0.8L3 3.2L5.5 0.8" fill="none" stroke="#7a7a7a" stroke-width="0.9"/></svg></div><div class="ab" style="left:244.2px;top:143.10px;width:9px;height:13.05px;background:#fff;border:1px solid #e6e7ec"><svg class="ab" style="left:1.2px;top:4.2px" width="6" height="4" viewBox="0 0 6 4"><path d="M0.5 0.8L3 3.2L5.5 0.8" fill="none" stroke="#7a7a7a" stroke-width="0.9"/></svg></div><div class="ab" style="left:288.2px;top:143.10px;width:9px;height:13.05px;background:#fff;border:1px solid #e6e7ec"><svg class="ab" style="left:1.2px;top:4.2px" width="6" height="4" viewBox="0 0 6 4"><path d="M0.5 0.8L3 3.2L5.5 0.8" fill="none" stroke="#7a7a7a" stroke-width="0.9"/></svg></div><div class="ab" style="left:371.2px;top:143.10px;width:9px;height:13.05px;background:#fff;border:1px solid #e6e7ec"><svg class="ab" style="left:1.2px;top:4.2px" width="6" height="4" viewBox="0 0 6 4"><path d="M0.5 0.8L3 3.2L5.5 0.8" fill="none" stroke="#7a7a7a" stroke-width="0.9"/></svg></div><div class="ab" style="left:626.2px;top:143.10px;width:9px;height:13.05px;background:#fff;border:1px solid #e6e7ec"><svg class="ab" style="left:1.2px;top:4.2px" width="6" height="4" viewBox="0 0 6 4"><path d="M0.5 0.8L3 3.2L5.5 0.8" fill="none" stroke="#7a7a7a" stroke-width="0.9"/></svg></div><div class="cell" style="left:82.7px;top:142.50px;width:40.0px;color:#2e2e2e"><span style="font-size:8.8px;vertical-align:1px;-webkit-text-stroke:0.15px #444">汁物</span></div><div class="cell" style="left:124.2px;top:142.50px;width:76.5px;color:#2e2e2e"><span style="font-size:8.8px;vertical-align:1px;-webkit-text-stroke:0.15px #444">かき玉汁</span></div><div class="cell" style="left:201.7px;top:142.50px;width:53.0px;color:#2e2e2e"><span style="font-size:8.8px;vertical-align:1px;-webkit-text-stroke:0.15px #444">保温汁碗</span></div><div class="cell" style="left:382.7px;top:142.50px;width:48.0px;color:#2e2e2e">10005A</div><div class="cell" style="left:432.2px;top:142.50px;width:101.5px;color:#2e2e2e"><span style="font-size:8.8px;vertical-align:1px;-webkit-text-stroke:0.15px #444">鶏卵</span></div><div class="cell" style="left:533.7px;top:142.50px;width:32.0px;text-align:right;color:#2e2e2e">10</div><div class="cell" style="left:567.7px;top:142.50px;width:22.5px;text-align:right;color:#2e2e2e">0</div><div class="cell" style="left:636.7px;top:142.50px;width:35.5px;text-align:right;color:#2e2e2e">9</div><div class="cell" style="left:673.7px;top:142.50px;width:33px;text-align:right;color:#2e2e2e;overflow:visible">15</div><div class="ab" style="left:25.2px;top:157.35px;width:9px;height:13.05px;background:#fff;border:1px solid #e6e7ec"><svg class="ab" style="left:1.2px;top:4.2px" width="6" height="4" viewBox="0 0 6 4"><path d="M0.5 0.8L3 3.2L5.5 0.8" fill="none" stroke="#7a7a7a" stroke-width="0.9"/></svg></div><div class="ab" style="left:112.2px;top:157.35px;width:9px;height:13.05px;background:#fff;border:1px solid #e6e7ec"><svg class="ab" style="left:1.2px;top:4.2px" width="6" height="4" viewBox="0 0 6 4"><path d="M0.5 0.8L3 3.2L5.5 0.8" fill="none" stroke="#7a7a7a" stroke-width="0.9"/></svg></div><div class="ab" style="left:244.2px;top:157.35px;width:9px;height:13.05px;background:#fff;border:1px solid #e6e7ec"><svg class="ab" style="left:1.2px;top:4.2px" width="6" height="4" viewBox="0 0 6 4"><path d="M0.5 0.8L3 3.2L5.5 0.8" fill="none" stroke="#7a7a7a" stroke-width="0.9"/></svg></div><div class="ab" style="left:288.2px;top:157.35px;width:9px;height:13.05px;background:#fff;border:1px solid #e6e7ec"><svg class="ab" style="left:1.2px;top:4.2px" width="6" height="4" viewBox="0 0 6 4"><path d="M0.5 0.8L3 3.2L5.5 0.8" fill="none" stroke="#7a7a7a" stroke-width="0.9"/></svg></div><div class="ab" style="left:371.2px;top:157.35px;width:9px;height:13.05px;background:#fff;border:1px solid #e6e7ec"><svg class="ab" style="left:1.2px;top:4.2px" width="6" height="4" viewBox="0 0 6 4"><path d="M0.5 0.8L3 3.2L5.5 0.8" fill="none" stroke="#7a7a7a" stroke-width="0.9"/></svg></div><div class="ab" style="left:626.2px;top:157.35px;width:9px;height:13.05px;background:#fff;border:1px solid #e6e7ec"><svg class="ab" style="left:1.2px;top:4.2px" width="6" height="4" viewBox="0 0 6 4"><path d="M0.5 0.8L3 3.2L5.5 0.8" fill="none" stroke="#7a7a7a" stroke-width="0.9"/></svg></div><div class="cell" style="left:382.7px;top:156.75px;width:48.0px;color:#2e2e2e">12096</div><div class="cell" style="left:432.2px;top:156.75px;width:101.5px;color:#2e2e2e"><span style="font-size:8.8px;vertical-align:1px;-webkit-text-stroke:0.15px #444">長葱</span></div><div class="cell" style="left:533.7px;top:156.75px;width:32.0px;text-align:right;color:#2e2e2e">3</div><div class="cell" style="left:567.7px;top:156.75px;width:22.5px;text-align:right;color:#2e2e2e">0</div><div class="cell" style="left:593.7px;top:156.75px;width:43.0px;color:#2e2e2e"><span style="font-size:8.8px;vertical-align:1px;-webkit-text-stroke:0.15px #444">小口切り</span></div><div class="cell" style="left:636.7px;top:156.75px;width:35.5px;text-align:right;color:#2e2e2e">2</div><div class="ab" style="left:25.2px;top:171.60px;width:9px;height:13.05px;background:#fff;border:1px solid #e6e7ec"><svg class="ab" style="left:1.2px;top:4.2px" width="6" height="4" viewBox="0 0 6 4"><path d="M0.5 0.8L3 3.2L5.5 0.8" fill="none" stroke="#7a7a7a" stroke-width="0.9"/></svg></div><div class="ab" style="left:112.2px;top:171.60px;width:9px;height:13.05px;background:#fff;border:1px solid #e6e7ec"><svg class="ab" style="left:1.2px;top:4.2px" width="6" height="4" viewBox="0 0 6 4"><path d="M0.5 0.8L3 3.2L5.5 0.8" fill="none" stroke="#7a7a7a" stroke-width="0.9"/></svg></div><div class="ab" style="left:244.2px;top:171.60px;width:9px;height:13.05px;background:#fff;border:1px solid #e6e7ec"><svg class="ab" style="left:1.2px;top:4.2px" width="6" height="4" viewBox="0 0 6 4"><path d="M0.5 0.8L3 3.2L5.5 0.8" fill="none" stroke="#7a7a7a" stroke-width="0.9"/></svg></div><div class="ab" style="left:288.2px;top:171.60px;width:9px;height:13.05px;background:#fff;border:1px solid #e6e7ec"><svg class="ab" style="left:1.2px;top:4.2px" width="6" height="4" viewBox="0 0 6 4"><path d="M0.5 0.8L3 3.2L5.5 0.8" fill="none" stroke="#7a7a7a" stroke-width="0.9"/></svg></div><div class="ab" style="left:371.2px;top:171.60px;width:9px;height:13.05px;background:#fff;border:1px solid #e6e7ec"><svg class="ab" style="left:1.2px;top:4.2px" width="6" height="4" viewBox="0 0 6 4"><path d="M0.5 0.8L3 3.2L5.5 0.8" fill="none" stroke="#7a7a7a" stroke-width="0.9"/></svg></div><div class="ab" style="left:626.2px;top:171.60px;width:9px;height:13.05px;background:#fff;border:1px solid #e6e7ec"><svg class="ab" style="left:1.2px;top:4.2px" width="6" height="4" viewBox="0 0 6 4"><path d="M0.5 0.8L3 3.2L5.5 0.8" fill="none" stroke="#7a7a7a" stroke-width="0.9"/></svg></div><div class="cell" style="left:382.7px;top:171.00px;width:48.0px;color:#2e2e2e">17008C</div><div class="cell" style="left:432.2px;top:171.00px;width:101.5px;color:#2e2e2e"><span style="font-size:8.8px;vertical-align:1px;-webkit-text-stroke:0.15px #444">減塩だしの素</span>77%</div><div class="cell" style="left:533.7px;top:171.00px;width:32.0px;text-align:right;color:#2e2e2e">0.6</div><div class="cell" style="left:567.7px;top:171.00px;width:22.5px;text-align:right;color:#2e2e2e">0</div><div class="cell" style="left:636.7px;top:171.00px;width:35.5px;text-align:right;color:#2e2e2e">1</div><div class="ab" style="left:25.2px;top:185.85px;width:9px;height:13.05px;background:#fff;border:1px solid #e6e7ec"><svg class="ab" style="left:1.2px;top:4.2px" width="6" height="4" viewBox="0 0 6 4"><path d="M0.5 0.8L3 3.2L5.5 0.8" fill="none" stroke="#7a7a7a" stroke-width="0.9"/></svg></div><div class="ab" style="left:112.2px;top:185.85px;width:9px;height:13.05px;background:#fff;border:1px solid #e6e7ec"><svg class="ab" style="left:1.2px;top:4.2px" width="6" height="4" viewBox="0 0 6 4"><path d="M0.5 0.8L3 3.2L5.5 0.8" fill="none" stroke="#7a7a7a" stroke-width="0.9"/></svg></div><div class="ab" style="left:244.2px;top:185.85px;width:9px;height:13.05px;background:#fff;border:1px solid #e6e7ec"><svg class="ab" style="left:1.2px;top:4.2px" width="6" height="4" viewBox="0 0 6 4"><path d="M0.5 0.8L3 3.2L5.5 0.8" fill="none" stroke="#7a7a7a" stroke-width="0.9"/></svg></div><div class="ab" style="left:288.2px;top:185.85px;width:9px;height:13.05px;background:#fff;border:1px solid #e6e7ec"><svg class="ab" style="left:1.2px;top:4.2px" width="6" height="4" viewBox="0 0 6 4"><path d="M0.5 0.8L3 3.2L5.5 0.8" fill="none" stroke="#7a7a7a" stroke-width="0.9"/></svg></div><div class="ab" style="left:371.2px;top:185.85px;width:9px;height:13.05px;background:#fff;border:1px solid #e6e7ec"><svg class="ab" style="left:1.2px;top:4.2px" width="6" height="4" viewBox="0 0 6 4"><path d="M0.5 0.8L3 3.2L5.5 0.8" fill="none" stroke="#7a7a7a" stroke-width="0.9"/></svg></div><div class="ab" style="left:626.2px;top:185.85px;width:9px;height:13.05px;background:#fff;border:1px solid #e6e7ec"><svg class="ab" style="left:1.2px;top:4.2px" width="6" height="4" viewBox="0 0 6 4"><path d="M0.5 0.8L3 3.2L5.5 0.8" fill="none" stroke="#7a7a7a" stroke-width="0.9"/></svg></div><div class="cell" style="left:382.7px;top:185.25px;width:48.0px;color:#2e2e2e">17002A</div><div class="cell" style="left:432.2px;top:185.25px;width:101.5px;color:#2e2e2e"><span style="font-size:8.8px;vertical-align:1px;-webkit-text-stroke:0.15px #444">食塩</span></div><div class="cell" style="left:533.7px;top:185.25px;width:32.0px;text-align:right;color:#2e2e2e">0.5</div><div class="cell" style="left:567.7px;top:185.25px;width:22.5px;text-align:right;color:#2e2e2e">0</div><div class="cell" style="left:636.7px;top:185.25px;width:35.5px;text-align:right;color:#2e2e2e">0</div><div class="ab" style="left:25.2px;top:200.10px;width:9px;height:13.05px;background:#fff;border:1px solid #e6e7ec"><svg class="ab" style="left:1.2px;top:4.2px" width="6" height="4" viewBox="0 0 6 4"><path d="M0.5 0.8L3 3.2L5.5 0.8" fill="none" stroke="#7a7a7a" stroke-width="0.9"/></svg></div><div class="ab" style="left:112.2px;top:200.10px;width:9px;height:13.05px;background:#fff;border:1px solid #e6e7ec"><svg class="ab" style="left:1.2px;top:4.2px" width="6" height="4" viewBox="0 0 6 4"><path d="M0.5 0.8L3 3.2L5.5 0.8" fill="none" stroke="#7a7a7a" stroke-width="0.9"/></svg></div><div class="ab" style="left:244.2px;top:200.10px;width:9px;height:13.05px;background:#fff;border:1px solid #e6e7ec"><svg class="ab" style="left:1.2px;top:4.2px" width="6" height="4" viewBox="0 0 6 4"><path d="M0.5 0.8L3 3.2L5.5 0.8" fill="none" stroke="#7a7a7a" stroke-width="0.9"/></svg></div><div class="ab" style="left:288.2px;top:200.10px;width:9px;height:13.05px;background:#fff;border:1px solid #e6e7ec"><svg class="ab" style="left:1.2px;top:4.2px" width="6" height="4" viewBox="0 0 6 4"><path d="M0.5 0.8L3 3.2L5.5 0.8" fill="none" stroke="#7a7a7a" stroke-width="0.9"/></svg></div><div class="ab" style="left:371.2px;top:200.10px;width:9px;height:13.05px;background:#fff;border:1px solid #e6e7ec"><svg class="ab" style="left:1.2px;top:4.2px" width="6" height="4" viewBox="0 0 6 4"><path d="M0.5 0.8L3 3.2L5.5 0.8" fill="none" stroke="#7a7a7a" stroke-width="0.9"/></svg></div><div class="ab" style="left:626.2px;top:200.10px;width:9px;height:13.05px;background:#fff;border:1px solid #e6e7ec"><svg class="ab" style="left:1.2px;top:4.2px" width="6" height="4" viewBox="0 0 6 4"><path d="M0.5 0.8L3 3.2L5.5 0.8" fill="none" stroke="#7a7a7a" stroke-width="0.9"/></svg></div><div class="cell" style="left:382.7px;top:199.50px;width:48.0px;color:#2e2e2e">17003A</div><div class="cell" style="left:432.2px;top:199.50px;width:101.5px;color:#2e2e2e"><span style="font-size:8.8px;vertical-align:1px;-webkit-text-stroke:0.15px #444">×醤油</span></div><div class="cell" style="left:533.7px;top:199.50px;width:32.0px;text-align:right;color:#2e2e2e">1.7</div><div class="cell" style="left:567.7px;top:199.50px;width:22.5px;text-align:right;color:#2e2e2e">0</div><div class="cell" style="left:636.7px;top:199.50px;width:35.5px;text-align:right;color:#2e2e2e">0</div><div class="ab" style="left:25.2px;top:214.35px;width:9px;height:13.05px;background:#fff;border:1px solid #e6e7ec"><svg class="ab" style="left:1.2px;top:4.2px" width="6" height="4" viewBox="0 0 6 4"><path d="M0.5 0.8L3 3.2L5.5 0.8" fill="none" stroke="#7a7a7a" stroke-width="0.9"/></svg></div><div class="ab" style="left:112.2px;top:214.35px;width:9px;height:13.05px;background:#fff;border:1px solid #e6e7ec"><svg class="ab" style="left:1.2px;top:4.2px" width="6" height="4" viewBox="0 0 6 4"><path d="M0.5 0.8L3 3.2L5.5 0.8" fill="none" stroke="#7a7a7a" stroke-width="0.9"/></svg></div><div class="ab" style="left:244.2px;top:214.35px;width:9px;height:13.05px;background:#fff;border:1px solid #e6e7ec"><svg class="ab" style="left:1.2px;top:4.2px" width="6" height="4" viewBox="0 0 6 4"><path d="M0.5 0.8L3 3.2L5.5 0.8" fill="none" stroke="#7a7a7a" stroke-width="0.9"/></svg></div><div class="ab" style="left:288.2px;top:214.35px;width:9px;height:13.05px;background:#fff;border:1px solid #e6e7ec"><svg class="ab" style="left:1.2px;top:4.2px" width="6" height="4" viewBox="0 0 6 4"><path d="M0.5 0.8L3 3.2L5.5 0.8" fill="none" stroke="#7a7a7a" stroke-width="0.9"/></svg></div><div class="ab" style="left:371.2px;top:214.35px;width:9px;height:13.05px;background:#fff;border:1px solid #e6e7ec"><svg class="ab" style="left:1.2px;top:4.2px" width="6" height="4" viewBox="0 0 6 4"><path d="M0.5 0.8L3 3.2L5.5 0.8" fill="none" stroke="#7a7a7a" stroke-width="0.9"/></svg></div><div class="ab" style="left:626.2px;top:214.35px;width:9px;height:13.05px;background:#fff;border:1px solid #e6e7ec"><svg class="ab" style="left:1.2px;top:4.2px" width="6" height="4" viewBox="0 0 6 4"><path d="M0.5 0.8L3 3.2L5.5 0.8" fill="none" stroke="#7a7a7a" stroke-width="0.9"/></svg></div><div class="cell" style="left:382.7px;top:213.75px;width:48.0px;color:#2e2e2e">16001C</div><div class="cell" style="left:432.2px;top:213.75px;width:101.5px;color:#2e2e2e"><span style="font-size:8.8px;vertical-align:1px;-webkit-text-stroke:0.15px #444">清酒</span></div><div class="cell" style="left:533.7px;top:213.75px;width:32.0px;text-align:right;color:#2e2e2e">0.7</div><div class="cell" style="left:567.7px;top:213.75px;width:22.5px;text-align:right;color:#2e2e2e">0</div><div class="cell" style="left:636.7px;top:213.75px;width:35.5px;text-align:right;color:#2e2e2e">0</div><div class="ab" style="left:25.2px;top:228.60px;width:9px;height:13.05px;background:#fff;border:1px solid #e6e7ec"><svg class="ab" style="left:1.2px;top:4.2px" width="6" height="4" viewBox="0 0 6 4"><path d="M0.5 0.8L3 3.2L5.5 0.8" fill="none" stroke="#7a7a7a" stroke-width="0.9"/></svg></div><div class="ab" style="left:112.2px;top:228.60px;width:9px;height:13.05px;background:#fff;border:1px solid #e6e7ec"><svg class="ab" style="left:1.2px;top:4.2px" width="6" height="4" viewBox="0 0 6 4"><path d="M0.5 0.8L3 3.2L5.5 0.8" fill="none" stroke="#7a7a7a" stroke-width="0.9"/></svg></div><div class="ab" style="left:244.2px;top:228.60px;width:9px;height:13.05px;background:#fff;border:1px solid #e6e7ec"><svg class="ab" style="left:1.2px;top:4.2px" width="6" height="4" viewBox="0 0 6 4"><path d="M0.5 0.8L3 3.2L5.5 0.8" fill="none" stroke="#7a7a7a" stroke-width="0.9"/></svg></div><div class="ab" style="left:288.2px;top:228.60px;width:9px;height:13.05px;background:#fff;border:1px solid #e6e7ec"><svg class="ab" style="left:1.2px;top:4.2px" width="6" height="4" viewBox="0 0 6 4"><path d="M0.5 0.8L3 3.2L5.5 0.8" fill="none" stroke="#7a7a7a" stroke-width="0.9"/></svg></div><div class="ab" style="left:371.2px;top:228.60px;width:9px;height:13.05px;background:#fff;border:1px solid #e6e7ec"><svg class="ab" style="left:1.2px;top:4.2px" width="6" height="4" viewBox="0 0 6 4"><path d="M0.5 0.8L3 3.2L5.5 0.8" fill="none" stroke="#7a7a7a" stroke-width="0.9"/></svg></div><div class="ab" style="left:626.2px;top:228.60px;width:9px;height:13.05px;background:#fff;border:1px solid #e6e7ec"><svg class="ab" style="left:1.2px;top:4.2px" width="6" height="4" viewBox="0 0 6 4"><path d="M0.5 0.8L3 3.2L5.5 0.8" fill="none" stroke="#7a7a7a" stroke-width="0.9"/></svg></div><div class="cell" style="left:382.7px;top:228.00px;width:48.0px;color:#2e2e2e">93031A</div><div class="cell" style="left:432.2px;top:228.00px;width:101.5px;color:#2e2e2e"><span style="font-size:8.8px;vertical-align:1px;-webkit-text-stroke:0.15px #444">食物せんい</span>(<span style="font-size:8.8px;vertical-align:1px;-webkit-text-stroke:0.15px #444">オクノス</span></div><div class="cell" style="left:533.7px;top:228.00px;width:32.0px;text-align:right;color:#2e2e2e">3</div><div class="cell" style="left:567.7px;top:228.00px;width:22.5px;text-align:right;color:#2e2e2e">0</div><div class="cell" style="left:636.7px;top:228.00px;width:35.5px;text-align:right;color:#2e2e2e">6</div><div class="ab" style="left:25.2px;top:242.85px;width:9px;height:13.05px;background:#fff;border:1px solid #e6e7ec"><svg class="ab" style="left:1.2px;top:4.2px" width="6" height="4" viewBox="0 0 6 4"><path d="M0.5 0.8L3 3.2L5.5 0.8" fill="none" stroke="#7a7a7a" stroke-width="0.9"/></svg></div><div class="ab" style="left:112.2px;top:242.85px;width:9px;height:13.05px;background:#fff;border:1px solid #e6e7ec"><svg class="ab" style="left:1.2px;top:4.2px" width="6" height="4" viewBox="0 0 6 4"><path d="M0.5 0.8L3 3.2L5.5 0.8" fill="none" stroke="#7a7a7a" stroke-width="0.9"/></svg></div><div class="ab" style="left:244.2px;top:242.85px;width:9px;height:13.05px;background:#fff;border:1px solid #e6e7ec"><svg class="ab" style="left:1.2px;top:4.2px" width="6" height="4" viewBox="0 0 6 4"><path d="M0.5 0.8L3 3.2L5.5 0.8" fill="none" stroke="#7a7a7a" stroke-width="0.9"/></svg></div><div class="ab" style="left:288.2px;top:242.85px;width:9px;height:13.05px;background:#fff;border:1px solid #e6e7ec"><svg class="ab" style="left:1.2px;top:4.2px" width="6" height="4" viewBox="0 0 6 4"><path d="M0.5 0.8L3 3.2L5.5 0.8" fill="none" stroke="#7a7a7a" stroke-width="0.9"/></svg></div><div class="ab" style="left:371.2px;top:242.85px;width:9px;height:13.05px;background:#fff;border:1px solid #e6e7ec"><svg class="ab" style="left:1.2px;top:4.2px" width="6" height="4" viewBox="0 0 6 4"><path d="M0.5 0.8L3 3.2L5.5 0.8" fill="none" stroke="#7a7a7a" stroke-width="0.9"/></svg></div><div class="ab" style="left:626.2px;top:242.85px;width:9px;height:13.05px;background:#fff;border:1px solid #e6e7ec"><svg class="ab" style="left:1.2px;top:4.2px" width="6" height="4" viewBox="0 0 6 4"><path d="M0.5 0.8L3 3.2L5.5 0.8" fill="none" stroke="#7a7a7a" stroke-width="0.9"/></svg></div><div class="cell" style="left:382.7px;top:242.25px;width:48.0px;color:#2e2e2e">17090</div><div class="cell" style="left:432.2px;top:242.25px;width:101.5px;color:#2e2e2e"><span style="font-size:8.8px;vertical-align:1px;-webkit-text-stroke:0.15px #444">水</span></div><div class="cell" style="left:533.7px;top:242.25px;width:32.0px;text-align:right;color:#2e2e2e">120</div><div class="cell" style="left:567.7px;top:242.25px;width:22.5px;text-align:right;color:#2e2e2e">0</div><div class="cell" style="left:636.7px;top:242.25px;width:35.5px;text-align:right;color:#2e2e2e">0</div><div class="ab" style="left:0.8px;top:99.45px;width:700px;height:16.05px;border:1.8px solid #151515;border-right:none"></div></div><div class="ab" style="left:1.3px;top:387.6px;width:700px;height:10px;background:#f0f0f0"></div><div class="ab" style="left:12px;top:390.8px;width:99.5px;height:1.6px;background:#8a8a8a"></div><div class="ab" style="left:1.3px;top:397.4px;width:700px;height:1px;background:#a0a0a0"></div><div class="ab" style="left:1.3px;top:397.6px;width:690.7px;height:20.4px;background:#f0f0f0;border-bottom:1px solid #b4b4b4"></div><div class="ab" style="left:692px;top:397.6px;width:10px;height:21px;background:#f1e7db"></div><div class="ab" style="left:1.8px;top:398.3px;width:45px;height:19.6px;background:#f0820e;color:#fff;font-size:10.2px;font-weight:bold;line-height:19px;text-align:center">栄養素</div><div class="ab" style="left:46.2px;top:398px;width:1.2px;height:19.6px;background:#a4a4a4"></div><div class="ab" style="left:46.8px;top:398.3px;width:58.3px;height:19px;color:#555;font-size:10.2px;line-height:19px;text-align:center;white-space:nowrap">糖尿交換</div><div class="ab" style="left:104.5px;top:398px;width:1.2px;height:19.6px;background:#a4a4a4"></div><div class="ab" style="left:105.1px;top:398.3px;width:57.8px;height:19px;color:#555;font-size:10.2px;line-height:19px;text-align:center;white-space:nowrap">腎臓交換</div><div class="ab" style="left:162.3px;top:398px;width:1.2px;height:19.6px;background:#a4a4a4"></div><div class="ab" style="left:162.9px;top:398.3px;width:58.0px;height:19px;color:#555;font-size:10.2px;line-height:19px;text-align:center;white-space:nowrap">糖腎交換</div><div class="ab" style="left:220.3px;top:398px;width:1.2px;height:19.6px;background:#a4a4a4"></div><div class="ab" style="left:220.9px;top:398.3px;width:53.0px;height:19px;color:#555;font-size:10.2px;line-height:19px;text-align:center;white-space:nowrap">アミノ酸</div><div class="ab" style="left:273.3px;top:398px;width:1.2px;height:19.6px;background:#a4a4a4"></div><div class="ab" style="left:273.9px;top:398.3px;width:46.5px;height:19px;color:#555;font-size:10.2px;line-height:19px;text-align:center;white-space:nowrap">脂肪酸</div><div class="ab" style="left:319.8px;top:398px;width:1.2px;height:19.6px;background:#a4a4a4"></div><div class="ab" style="left:320.4px;top:398.3px;width:46.7px;height:19px;color:#555;font-size:10.2px;line-height:19px;text-align:center;white-space:nowrap">画像朝</div><div class="ab" style="left:366.5px;top:398px;width:1.2px;height:19.6px;background:#a4a4a4"></div><div class="ab" style="left:367.1px;top:398.3px;width:46.6px;height:19px;color:#555;font-size:10.2px;line-height:19px;text-align:center;white-space:nowrap">画像昼</div><div class="ab" style="left:413.1px;top:398px;width:1.2px;height:19.6px;background:#a4a4a4"></div><div class="ab" style="left:413.7px;top:398.3px;width:46.9px;height:19px;color:#555;font-size:10.2px;line-height:19px;text-align:center;white-space:nowrap">画像夕</div><div class="ab" style="left:460.0px;top:398px;width:1.2px;height:19.6px;background:#a4a4a4"></div><div class="ab" style="left:460.6px;top:398.3px;width:60.1px;height:19px;color:#555;font-size:10.2px;line-height:19px;text-align:center;white-space:nowrap">画像<span style="font-size:12.5px">10</span>時</div><div class="ab" style="left:520.1px;top:398px;width:1.2px;height:19.6px;background:#a4a4a4"></div><div class="ab" style="left:520.7px;top:398.3px;width:62.7px;height:19px;color:#555;font-size:10.2px;line-height:19px;text-align:center;white-space:nowrap">画像<span style="font-size:12.5px">15</span>時</div><div class="ab" style="left:582.8px;top:398px;width:1.2px;height:19.6px;background:#a4a4a4"></div><div class="ab" style="left:583.4px;top:398.3px;width:62.9px;height:19px;color:#555;font-size:10.2px;line-height:19px;text-align:center;white-space:nowrap">画像<span style="font-size:12.5px">20</span>時</div><div class="ab" style="left:645.7px;top:398px;width:1.2px;height:19.6px;background:#a4a4a4"></div><div class="ab" style="left:646.3px;top:398.3px;width:45.7px;height:19px;color:#555;font-size:10.2px;line-height:19px;text-align:center;white-space:nowrap">材料費</div><div class="ab" style="left:691.4px;top:398px;width:1.2px;height:19.6px;background:#a4a4a4"></div><div class="ab" style="left:1.3px;top:418.3px;width:700px;height:100px;background:#f1e7db"></div><div class="ab" style="left:3.5px;top:419.3px;width:39px;height:14.7px;background:#efe8dc;border-bottom:1px solid #b8ab98;color:#fff;font-size:10px;line-height:13px;text-align:center">切替</div><div class="ab" style="left:42.5px;top:419.3px;width:700px;height:14.7px;background:#e9ebe6;border-bottom:1px solid #b8ad9c"></div><div class="nh" style="left:42.50px;width:38.37px"><span style="font-size:8.8px">ｴﾈﾙｷﾞｰ</span></div><div class="ab" style="left:42.00px;top:419.3px;width:1px;height:14px;background:#bdb3a3"></div><div class="nh" style="left:80.87px;width:38.37px">蛋白質</div><div class="ab" style="left:80.37px;top:419.3px;width:1px;height:14px;background:#bdb3a3"></div><div class="nh" style="left:119.24px;width:38.37px">脂質</div><div class="ab" style="left:118.74px;top:419.3px;width:1px;height:14px;background:#bdb3a3"></div><div class="nh" style="left:157.61px;width:38.37px">炭水</div><div class="ab" style="left:157.11px;top:419.3px;width:1px;height:14px;background:#bdb3a3"></div><div class="nh" style="left:195.98px;width:38.37px"><span style="font-size:8.8px">ﾅﾄﾘｳﾑ</span></div><div class="ab" style="left:195.48px;top:419.3px;width:1px;height:14px;background:#bdb3a3"></div><div class="nh" style="left:234.35px;width:38.37px">食繊維</div><div class="ab" style="left:233.85px;top:419.3px;width:1px;height:14px;background:#bdb3a3"></div><div class="nh" style="left:272.72px;width:38.37px"><span style="font-size:8.8px">ｶﾘｳﾑ</span></div><div class="ab" style="left:272.22px;top:419.3px;width:1px;height:14px;background:#bdb3a3"></div><div class="nh" style="left:311.09px;width:38.37px">水分</div><div class="ab" style="left:310.59px;top:419.3px;width:1px;height:14px;background:#bdb3a3"></div><div class="nh" style="left:349.46px;width:38.37px">鉄</div><div class="ab" style="left:348.96px;top:419.3px;width:1px;height:14px;background:#bdb3a3"></div><div class="nh" style="left:387.83px;width:38.37px"><span style="font-size:8.8px">ｶﾙｼｳﾑ</span></div><div class="ab" style="left:387.33px;top:419.3px;width:1px;height:14px;background:#bdb3a3"></div><div class="nh" style="left:426.20px;width:38.37px"><span style="font-size:10.5px">VD</span></div><div class="ab" style="left:425.70px;top:419.3px;width:1px;height:14px;background:#bdb3a3"></div><div class="nh" style="left:464.57px;width:38.37px">亜鉛</div><div class="ab" style="left:464.07px;top:419.3px;width:1px;height:14px;background:#bdb3a3"></div><div class="nh" style="left:502.94px;width:38.37px">リン</div><div class="ab" style="left:502.44px;top:419.3px;width:1px;height:14px;background:#bdb3a3"></div><div class="nh" style="left:541.31px;width:38.37px">灰分</div><div class="ab" style="left:540.81px;top:419.3px;width:1px;height:14px;background:#bdb3a3"></div><div class="nh" style="left:579.68px;width:38.37px"><span style="font-size:10.5px">Mg</span></div><div class="ab" style="left:579.18px;top:419.3px;width:1px;height:14px;background:#bdb3a3"></div><div class="nh" style="left:618.05px;width:38.37px"><span style="font-size:8.8px">ﾄﾘｱｼ</span>当量</div><div class="ab" style="left:617.55px;top:419.3px;width:1px;height:14px;background:#bdb3a3"></div><div class="nh" style="left:656.42px;width:38.37px;line-height:6.2px;padding-top:1.2px;font-size:7.5px"><span style="font-size:7.5px">ｱﾐﾉ</span>酸当<br>量</div><div class="ab" style="left:655.92px;top:419.3px;width:1px;height:14px;background:#bdb3a3"></div><div class="ab" style="left:694.29px;top:419.3px;width:1px;height:14px;background:#bdb3a3"></div><div class="ab" style="left:42.5px;top:434.00px;width:700px;height:14.10px;background:#ffffff"></div><div class="ab" style="left:3.5px;top:434.00px;width:39px;height:14.10px;background:#efe8dc;border-bottom:1.2px solid #a89c88;color:#2e8282;font-size:9px;-webkit-text-stroke:0.35px #2e8282;line-height:14px;text-align:center;">基準値</div><div class="ab" style="left:42.5px;top:448.10px;width:700px;height:14.10px;background:#eff5ee"></div><div class="ab" style="left:3.5px;top:448.10px;width:39px;height:14.10px;background:#efe8dc;border-bottom:1.2px solid #a89c88;color:#2e8282;font-size:9px;-webkit-text-stroke:0.35px #2e8282;line-height:14px;text-align:center;letter-spacing:6.3px;padding-left:6.3px">一日</div><div class="ab" style="left:42.5px;top:462.20px;width:700px;height:14.10px;background:#ffffff"></div><div class="ab" style="left:3.5px;top:462.20px;width:39px;height:14.10px;background:#efe8dc;border-bottom:1.2px solid #a89c88;color:#2e8282;font-size:9px;-webkit-text-stroke:0.35px #2e8282;line-height:14px;text-align:center;letter-spacing:6.3px;padding-left:6.3px">食事</div><div class="ab" style="left:42.5px;top:476.30px;width:700px;height:14.10px;background:#eff5ee"></div><div class="ab" style="left:3.5px;top:476.30px;width:39px;height:14.10px;background:#efe8dc;border-bottom:1.2px solid #a89c88;color:#2e8282;font-size:9px;-webkit-text-stroke:0.35px #2e8282;line-height:14px;text-align:center;letter-spacing:6.3px;padding-left:6.3px">料理</div><div class="ab" style="left:42.5px;top:490.40px;width:700px;height:14.10px;background:#ffffff"></div><div class="ab" style="left:3.5px;top:490.40px;width:39px;height:14.10px;background:#efe8dc;border-bottom:1.2px solid #a89c88;color:#2e8282;font-size:9px;-webkit-text-stroke:0.35px #2e8282;line-height:14px;text-align:center;letter-spacing:6.3px;padding-left:6.3px">食品</div><div class="ab" style="left:42.00px;top:434.00px;width:1px;height:70.50px;background:#e4e4e4"></div><div class="ab" style="left:80.37px;top:434.00px;width:1px;height:70.50px;background:#e4e4e4"></div><div class="ab" style="left:118.74px;top:434.00px;width:1px;height:70.50px;background:#e4e4e4"></div><div class="ab" style="left:157.11px;top:434.00px;width:1px;height:70.50px;background:#e4e4e4"></div><div class="ab" style="left:195.48px;top:434.00px;width:1px;height:70.50px;background:#e4e4e4"></div><div class="ab" style="left:233.85px;top:434.00px;width:1px;height:70.50px;background:#e4e4e4"></div><div class="ab" style="left:272.22px;top:434.00px;width:1px;height:70.50px;background:#e4e4e4"></div><div class="ab" style="left:310.59px;top:434.00px;width:1px;height:70.50px;background:#e4e4e4"></div><div class="ab" style="left:348.96px;top:434.00px;width:1px;height:70.50px;background:#e4e4e4"></div><div class="ab" style="left:387.33px;top:434.00px;width:1px;height:70.50px;background:#e4e4e4"></div><div class="ab" style="left:425.70px;top:434.00px;width:1px;height:70.50px;background:#e4e4e4"></div><div class="ab" style="left:464.07px;top:434.00px;width:1px;height:70.50px;background:#e4e4e4"></div><div class="ab" style="left:502.44px;top:434.00px;width:1px;height:70.50px;background:#e4e4e4"></div><div class="ab" style="left:540.81px;top:434.00px;width:1px;height:70.50px;background:#e4e4e4"></div><div class="ab" style="left:579.18px;top:434.00px;width:1px;height:70.50px;background:#e4e4e4"></div><div class="ab" style="left:617.55px;top:434.00px;width:1px;height:70.50px;background:#e4e4e4"></div><div class="ab" style="left:655.92px;top:434.00px;width:1px;height:70.50px;background:#e4e4e4"></div><div class="ab" style="left:694.29px;top:434.00px;width:1px;height:70.50px;background:#e4e4e4"></div><div class="nc" style="left:42.50px;top:434.00px;width:37.07px">1111</div><div class="nc" style="left:80.87px;top:434.00px;width:37.07px">222.0</div><div class="nc" style="left:119.24px;top:434.00px;width:37.07px">33.0</div><div class="nc" style="left:157.61px;top:434.00px;width:37.07px">444.0</div><div class="nc" style="left:311.09px;top:434.00px;width:37.07px">2222.0</div><div class="nc" style="left:42.50px;top:448.10px;width:37.07px">1953</div><div class="nc" style="left:80.87px;top:448.10px;width:37.07px">78.0</div><div class="nc" style="left:119.24px;top:448.10px;width:37.07px">52.5</div><div class="nc" style="left:157.61px;top:448.10px;width:37.07px">321.8</div><div class="nc" style="left:195.98px;top:448.10px;width:37.07px">3403</div><div class="nc" style="left:234.35px;top:448.10px;width:37.07px">34.3</div><div class="nc" style="left:272.72px;top:448.10px;width:37.07px">2837</div><div class="nc" style="left:311.09px;top:448.10px;width:37.07px">1633.8</div><div class="nc" style="left:349.46px;top:448.10px;width:37.07px">10.9</div><div class="nc" style="left:387.83px;top:448.10px;width:37.07px">664</div><div class="nc" style="left:426.20px;top:448.10px;width:37.07px">41.8</div><div class="nc" style="left:464.57px;top:448.10px;width:37.07px">11.7</div><div class="nc" style="left:502.94px;top:448.10px;width:37.07px">1130</div><div class="nc" style="left:541.31px;top:448.10px;width:37.07px">17.4</div><div class="nc" style="left:579.68px;top:448.10px;width:37.07px">283</div><div class="nc" style="left:618.05px;top:448.10px;width:37.07px">38.0</div><div class="nc" style="left:656.42px;top:448.10px;width:37.07px">51.0</div><div class="nc" style="left:42.50px;top:462.20px;width:37.07px">697</div><div class="nc" style="left:80.87px;top:462.20px;width:37.07px">22.7</div><div class="nc" style="left:119.24px;top:462.20px;width:37.07px">24.2</div><div class="nc" style="left:157.61px;top:462.20px;width:37.07px">108.7</div><div class="nc" style="left:195.98px;top:462.20px;width:37.07px">1421</div><div class="nc" style="left:234.35px;top:462.20px;width:37.07px">15.4</div><div class="nc" style="left:272.72px;top:462.20px;width:37.07px">979</div><div class="nc" style="left:311.09px;top:462.20px;width:37.07px">543.3</div><div class="nc" style="left:349.46px;top:462.20px;width:37.07px">3.6</div><div class="nc" style="left:387.83px;top:462.20px;width:37.07px">219</div><div class="nc" style="left:426.20px;top:462.20px;width:37.07px">5.9</div><div class="nc" style="left:464.57px;top:462.20px;width:37.07px">4.7</div><div class="nc" style="left:502.94px;top:462.20px;width:37.07px">319</div><div class="nc" style="left:541.31px;top:462.20px;width:37.07px">6.9</div><div class="nc" style="left:579.68px;top:462.20px;width:37.07px">129</div><div class="nc" style="left:618.05px;top:462.20px;width:37.07px">13.0</div><div class="nc" style="left:656.42px;top:462.20px;width:37.07px">10.0</div><div class="nc" style="left:42.50px;top:476.30px;width:37.07px">302</div><div class="nc" style="left:80.87px;top:476.30px;width:37.07px">4.9</div><div class="nc" style="left:119.24px;top:476.30px;width:37.07px">0.6</div><div class="nc" style="left:157.61px;top:476.30px;width:37.07px">71.9</div><div class="nc" style="left:195.98px;top:476.30px;width:37.07px">227</div><div class="nc" style="left:234.35px;top:476.30px;width:37.07px">3.0</div><div class="nc" style="left:272.72px;top:476.30px;width:37.07px">57</div><div class="nc" style="left:311.09px;top:476.30px;width:37.07px">114.2</div><div class="nc" style="left:349.46px;top:476.30px;width:37.07px">0.2</div><div class="nc" style="left:387.83px;top:476.30px;width:37.07px">80</div><div class="nc" style="left:426.20px;top:476.30px;width:37.07px">5.0</div><div class="nc" style="left:464.57px;top:476.30px;width:37.07px">2.1</div><div class="nc" style="left:502.94px;top:476.30px;width:37.07px">67</div><div class="nc" style="left:541.31px;top:476.30px;width:37.07px">1.0</div><div class="nc" style="left:579.68px;top:476.30px;width:37.07px">17</div><div class="nc" style="left:618.05px;top:476.30px;width:37.07px">0.4</div><div class="nc" style="left:656.42px;top:476.30px;width:37.07px">3.8</div><div class="nc" style="left:42.50px;top:490.40px;width:37.07px">296</div><div class="nc" style="left:80.87px;top:490.40px;width:37.07px">4.8</div><div class="nc" style="left:119.24px;top:490.40px;width:37.07px">0.6</div><div class="nc" style="left:157.61px;top:490.40px;width:37.07px">70.5</div><div class="nc" style="left:195.98px;top:490.40px;width:37.07px">2</div><div class="nc" style="left:234.35px;top:490.40px;width:37.07px">2.9</div><div class="nc" style="left:272.72px;top:490.40px;width:37.07px">55</div><div class="nc" style="left:311.09px;top:490.40px;width:37.07px">114.0</div><div class="nc" style="left:349.46px;top:490.40px;width:37.07px">0.2</div><div class="nc" style="left:387.83px;top:490.40px;width:37.07px">6</div><div class="nc" style="left:426.20px;top:490.40px;width:37.07px">0.0</div><div class="nc" style="left:464.57px;top:490.40px;width:37.07px">1.1</div><div class="nc" style="left:502.94px;top:490.40px;width:37.07px">65</div><div class="nc" style="left:541.31px;top:490.40px;width:37.07px">0.2</div><div class="nc" style="left:579.68px;top:490.40px;width:37.07px">13</div><div class="nc" style="left:618.05px;top:490.40px;width:37.07px">0.4</div><div class="nc" style="left:656.42px;top:490.40px;width:37.07px">3.8</div><div class="ab" style="left:1.3px;top:517.1px;width:700px;height:13px;background:#efeff0"></div><div class="ab" style="left:14px;top:521.4px;width:444px;height:1.5px;background:#8a8a8a"></div><div class="ab" style="left:0;top:527.8px;width:700px;height:1.4px;background:#8c8c8c"></div></body></html>
